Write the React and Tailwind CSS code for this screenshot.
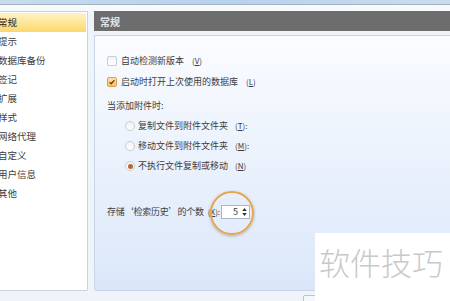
import React from 'react';

const navItems = ['常规', '提示', '数据库备份', '签记', '扩展', '样式', '网络代理', '自定义', '用户信息', '其他'];

function Checkbox({ checked }) {
  if (checked) {
    return (
      <span className="flex h-[10px] w-[10px] items-center justify-center rounded-[2px] border border-[#d9a04a] bg-gradient-to-b from-[#fde3a4] to-[#f6c46a]">
        <svg viewBox="0 0 10 10" className="h-[8px] w-[8px]">
          <path d="M2 5.2 L4 7.2 L8 2.8" fill="none" stroke="#6b3a10" strokeWidth="1.6" />
        </svg>
      </span>
    );
  }
  return <span className="h-[10px] w-[10px] rounded-[2px] border border-[#c3cddb] bg-gradient-to-b from-[#f2f5f9] to-white" />;
}

function Radio({ checked }) {
  return (
    <span className="flex h-[10px] w-[10px] items-center justify-center rounded-full border border-[#c5cdd9] bg-gradient-to-b from-[#eef2f7] to-white">
      {checked && <span className="h-[5px] w-[5px] rounded-full bg-[#b8692a]" />}
    </span>
  );
}

function Key({ k, colon }) {
  return (
    <span className="ml-[4px] text-[8px]">
      (<span className="underline">{k}</span>){colon ? ':' : ''}
    </span>
  );
}

export default function App() {
  return (
    <div
      className="relative h-[301px] w-[450px] overflow-hidden bg-[#eff4fb] text-[#3c3c3c]"
      style={{ fontFamily: '"Noto Sans CJK SC", "Noto Sans", sans-serif' }}
    >
      <div className="h-[4px] bg-gradient-to-r from-[#c7dbef] via-[#b5d2ee] to-[#c9dcef]" />
      <div className="h-[1px] bg-[#a9b3bf]" />
      <div className="h-[6px] bg-[#f7fafd]" />

      <div className="flex h-[280px] gap-[6px]">
        <div className="w-[88px] shrink-0 rounded-br-[2px] border-r border-b border-t border-[#c9d3e0] bg-white pt-[1px]">
          {navItems.map((item, i) => (
            <div
              key={item}
              className={
                'flex h-[19px] items-center pl-0 text-[9.5px] leading-none ' +
                (i === 0 ? 'mr-[1px] bg-gradient-to-b from-[#fff3c4] to-[#fcd769] text-[#222]' : '')
              }
            >
              <span className="-ml-[2px]">{item}</span>
            </div>
          ))}
        </div>

        <div className="flex flex-1 flex-col">
          <div className="flex h-[20px] items-center bg-[#6d6d6d] pl-[6px] text-[10px] font-bold text-[#e6e6e6]">常规</div>
          <div className="mt-[4px] h-[256px] rounded-bl-[3px] border-t border-l border-b border-[#c8d5e6] bg-gradient-to-b from-[#fafcff] to-[#dbe7f9] pt-[15px] pl-[12px] text-[9px]">
            <div className="flex h-[20px] items-center gap-[4px]">
              <Checkbox />
              <span>自动检测新版本</span>
              <Key k="V" />
            </div>
            <div className="mt-[1px] flex h-[20px] items-center gap-[4px]">
              <Checkbox checked />
              <span>启动时打开上次使用的数据库</span>
              <Key k="L" />
            </div>
            <div className="mt-[4px] flex h-[20px] items-center">当添加附件时:</div>
            <div className="pl-[18px]">
              <div className="flex h-[20px] items-center gap-[3px]">
                <Radio />
                <span>复制文件到附件文件夹</span>
                <Key k="T" colon />
              </div>
              <div className="flex h-[20px] items-center gap-[3px]">
                <Radio />
                <span>移动文件到附件文件夹</span>
                <Key k="M" colon />
              </div>
              <div className="flex h-[20px] items-center gap-[3px]">
                <Radio checked />
                <span>不执行文件复制或移动</span>
                <Key k="N" />
              </div>
            </div>
            <div className="mt-[26px] flex h-[20px] items-center">
              <span className="tracking-[-0.2px]">存储‘检索历史’的个数</span>
              <Key k="X" colon />
              <div className="ml-[1px] flex h-[14px] w-[29px] items-center justify-end border border-[#aab6c6] bg-white pr-[2px]">
                <span className="mr-[4px] text-[9px] text-[#333]">5</span>
                <div className="flex flex-col items-center text-[#333]">
                  <svg viewBox="0 0 6 4" className="h-[3px] w-[5px]"><path d="M0 4 L3 0 L6 4 Z" fill="#333" /></svg>
                  <svg viewBox="0 0 6 4" className="mt-[2px] h-[3px] w-[5px]"><path d="M0 0 L3 4 L6 0 Z" fill="#333" /></svg>
                </div>
              </div>
            </div>
          </div>
        </div>
      </div>

      <div className="absolute left-[210px] top-[191px] h-[44px] w-[44px] rounded-full border-2 border-[#e6a650] shadow-[0_1px_3px_rgba(120,90,40,0.45)]" />

      <div className="absolute left-[303px] top-[295px] h-[10px] w-[14px] rounded-[2px] border border-[#b9c4d2] bg-[#f4f7fb]" />

      <div className="absolute left-[315px] top-[233px] flex h-[68px] w-[135px] items-start bg-white pl-[4px] pt-[11px]">
        <span className="text-[31px] font-light leading-[36px] text-[#c9c9c9]">软件技巧</span>
      </div>
    </div>
  );
}
